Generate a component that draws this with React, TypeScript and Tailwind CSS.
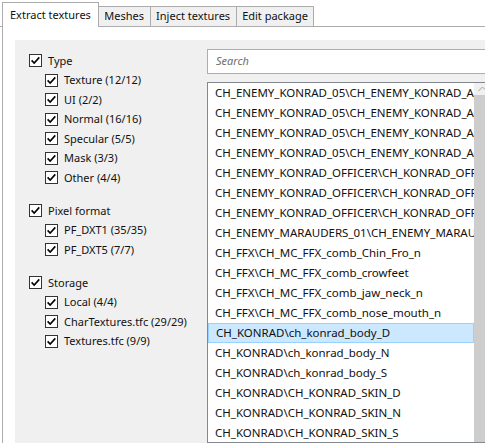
const TABS = ['Extract textures', 'Meshes', 'Inject textures', 'Edit package']

interface FilterGroup {
  label: string
  items: string[]
}

const GROUPS: FilterGroup[] = [
  {
    label: 'Type',
    items: ['Texture (12/12)', 'UI (2/2)', 'Normal (16/16)', 'Specular (5/5)', 'Mask (3/3)', 'Other (4/4)'],
  },
  { label: 'Pixel format', items: ['PF_DXT1 (35/35)', 'PF_DXT5 (7/7)'] },
  { label: 'Storage', items: ['Local (4/4)', 'CharTextures.tfc (29/29)', 'Textures.tfc (9/9)'] },
]

const ROWS = [
  'CH_ENEMY_KONRAD_05\\CH_ENEMY_KONRAD_A_D',
  'CH_ENEMY_KONRAD_05\\CH_ENEMY_KONRAD_A_M',
  'CH_ENEMY_KONRAD_05\\CH_ENEMY_KONRAD_A_N',
  'CH_ENEMY_KONRAD_05\\CH_ENEMY_KONRAD_A_S',
  'CH_ENEMY_KONRAD_OFFICER\\CH_KONRAD_OFFICER_D',
  'CH_ENEMY_KONRAD_OFFICER\\CH_KONRAD_OFFICER_N',
  'CH_ENEMY_KONRAD_OFFICER\\CH_KONRAD_OFFICER_S',
  'CH_ENEMY_MARAUDERS_01\\CH_ENEMY_MARAUDERS_D',
  'CH_FFX\\CH_MC_FFX_comb_Chin_Fro_n',
  'CH_FFX\\CH_MC_FFX_comb_crowfeet',
  'CH_FFX\\CH_MC_FFX_comb_jaw_neck_n',
  'CH_FFX\\CH_MC_FFX_comb_nose_mouth_n',
  'CH_KONRAD\\ch_konrad_body_D',
  'CH_KONRAD\\ch_konrad_body_N',
  'CH_KONRAD\\ch_konrad_body_S',
  'CH_KONRAD\\CH_KONRAD_SKIN_D',
  'CH_KONRAD\\CH_KONRAD_SKIN_N',
  'CH_KONRAD\\CH_KONRAD_SKIN_S',
  'CH_KONRAD\\CH_KONRAD_SKIN_M',
]

const SELECTED = 12

function CheckBox() {
  return (
    <svg width="13" height="13" viewBox="0 0 13 13" className="shrink-0">
      <rect x="0.5" y="0.5" width="12" height="12" fill="#fff" stroke="#333" />
      <path d="M2.6 6.4 L5.2 9.1 L10.3 3.4" fill="none" stroke="#000" strokeWidth="1.6" />
    </svg>
  )
}

function CheckRow({ label, indent }: { label: string; indent?: boolean }) {
  return (
    <div className={`flex h-[19.5px] items-center gap-[6px] ${indent ? 'pl-[30px]' : 'pl-[14px]'}`}>
      <CheckBox />
      <span className="whitespace-nowrap">{label}</span>
    </div>
  )
}

export default function App() {
  return (
    <div
      className="flex h-[443px] w-[485px] flex-col overflow-hidden bg-white text-[11px] text-[#111]"
      style={{ fontFamily: '"Noto Sans", "Open Sans", sans-serif' }}
    >
      {/* Tab strip */}
      <div className="flex h-[27px] shrink-0 items-end border-b border-[#acacac] pl-[2px]">
        {TABS.map((tab, i) =>
          i === 0 ? (
            <div
              key={tab}
              className="relative -mb-px flex h-[25px] items-center border border-b-0 border-[#acacac] bg-white px-[7px]"
            >
              {tab}
            </div>
          ) : (
            <div
              key={tab}
              className="flex h-[20px] items-center border border-b-0 border-l-0 border-[#acacac] bg-[#f0f0f0] px-[5.5px]"
            >
              {tab}
            </div>
          )
        )}
      </div>

      {/* Tab panel */}
      <div className="ml-[2px] flex min-h-0 flex-1 border-l border-[#acacac] pl-[12px] pt-[13px]">
        <div className="flex min-h-0 flex-1 bg-[#f0f0f0]">
          {/* Filters */}
          <div className="w-[192px] shrink-0 pt-[11px]">
            {GROUPS.map((group, gi) => (
              <div key={group.label} className={gi > 0 ? 'mt-[13.5px]' : ''}>
                <CheckRow label={group.label} />
                {group.items.map((item) => (
                  <CheckRow key={item} label={item} indent />
                ))}
              </div>
            ))}
          </div>

          {/* Search + list */}
          <div className="flex w-[285px] shrink-0 flex-col pt-[9px]">
            <div className="flex h-[25px] shrink-0 items-center border border-[#abadb3] bg-white pl-[8px] italic text-[#6d6d6d]">
              Search
            </div>
            <div className="mt-[8px] flex min-h-0 flex-1 border border-[#828790] bg-white">
              <div className="min-w-0 flex-1 overflow-hidden">
                {ROWS.map((row, i) => (
                  <div
                    key={row}
                    className={`flex h-[20px] items-center whitespace-nowrap pl-[7px] text-[11.5px] ${
                      i === SELECTED ? 'border border-[#99d1ff] bg-[#cce8ff] pl-[6px]' : ''
                    }`}
                  >
                    {row}
                  </div>
                ))}
              </div>
              <div className="flex w-[17px] shrink-0 flex-col bg-[#f0f0f0]">
                <div className="flex h-[12px] items-center justify-center">
                  <svg width="9" height="6" viewBox="0 0 9 6">
                    <path d="M0.5 5 L4.5 1 L8.5 5" fill="none" stroke="#a0a0a0" strokeWidth="1" />
                  </svg>
                </div>
                <div className="flex-1 bg-[#cdcdcd]" />
              </div>
            </div>
          </div>
        </div>
      </div>
    </div>
  )
}
